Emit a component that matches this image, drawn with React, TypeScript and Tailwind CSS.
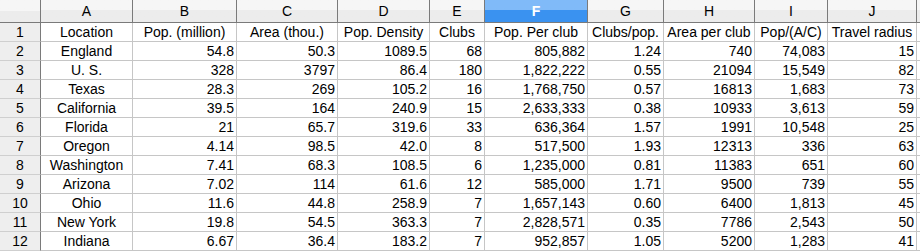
import React from 'react'

const cols = ['A', 'B', 'C', 'D', 'E', 'F', 'G', 'H', 'I', 'J']

const headers = ['Location', 'Pop. (million)', 'Area (thou.)', 'Pop. Density', 'Clubs', 'Pop. Per club', 'Clubs/pop.', 'Area per club', 'Pop/(A/C)', 'Travel radius']

const rows: string[][] = [
  ['England', '54.8', '50.3', '1089.5', '68', '805,882', '1.24', '740', '74,083', '15'],
  ['U. S.', '328', '3797', '86.4', '180', '1,822,222', '0.55', '21094', '15,549', '82'],
  ['Texas', '28.3', '269', '105.2', '16', '1,768,750', '0.57', '16813', '1,683', '73'],
  ['California', '39.5', '164', '240.9', '15', '2,633,333', '0.38', '10933', '3,613', '59'],
  ['Florida', '21', '65.7', '319.6', '33', '636,364', '1.57', '1991', '10,548', '25'],
  ['Oregon', '4.14', '98.5', '42.0', '8', '517,500', '1.93', '12313', '336', '63'],
  ['Washington', '7.41', '68.3', '108.5', '6', '1,235,000', '0.81', '11383', '651', '60'],
  ['Arizona', '7.02', '114', '61.6', '12', '585,000', '1.71', '9500', '739', '55'],
  ['Ohio', '11.6', '44.8', '258.9', '7', '1,657,143', '0.60', '6400', '1,813', '45'],
  ['New York', '19.8', '54.5', '363.3', '7', '2,828,571', '0.35', '7786', '2,543', '50'],
  ['Indiana', '6.67', '36.4', '183.2', '7', '952,857', '1.05', '5200', '1,283', '41'],
]

const gridCols = 'grid-cols-[41px_92px_104px_101px_92px_55px_103px_76px_91px_73px_89px_1fr]'

export default function App() {
  return (
    <div className="w-[920px] h-[252px] bg-white overflow-hidden text-[14px] text-black" style={{ fontFamily: '"Liberation Sans", Arial, sans-serif' }}>
      <div className={`grid ${gridCols}`}>
        {/* column headers */}
        <div className="h-[23px] border-r border-b border-[#7a7a7a] bg-linear-to-b from-[#f6f6f6] from-50% to-[#ececec] to-50%" />
        {cols.map(c => (
          <div
            key={c}
            className={
              c === 'F'
                ? 'h-[23px] flex items-center justify-center border-r border-b border-[#7a7a7a] bg-linear-to-b from-[#80baf8] from-45% to-[#3a92f0] to-45% text-white font-bold'
                : 'h-[23px] flex items-center justify-center border-r border-b border-[#7a7a7a] bg-linear-to-b from-[#f6f6f6] from-45% to-[#ececec] to-45%'
            }
          >
            {c}
          </div>
        ))}
        <div className="h-[23px] border-b border-[#7a7a7a] bg-linear-to-b from-[#f6f6f6] from-45% to-[#ececec] to-45%" />

        {/* row 1: labels */}
        <div className="h-[19px] flex items-center justify-center border-r border-r-[#7a7a7a] border-b border-b-[#cfcfcf] bg-[#eeeeee]">1</div>
        {headers.map(h => (
          <div key={h} className="h-[19px] flex items-center justify-center whitespace-nowrap overflow-hidden border-r border-b border-[#c6c6c6]">
            {h}
          </div>
        ))}
        <div className="h-[19px] border-b border-[#c6c6c6]" />

        {/* data rows */}
        {rows.map((r, i) => (
          <React.Fragment key={i}>
            <div className="h-[19px] flex items-center justify-center border-r border-r-[#7a7a7a] border-b border-b-[#cfcfcf] bg-[#eeeeee]">{i + 2}</div>
            {r.map((v, j) => (
              <div
                key={j}
                className={
                  j === 0
                    ? 'h-[19px] flex items-center justify-center whitespace-nowrap border-r border-b border-[#c6c6c6]'
                    : 'h-[19px] flex items-center justify-end pr-[2px] whitespace-nowrap border-r border-b border-[#c6c6c6]'
                }
              >
                {v}
              </div>
            ))}
            <div className="h-[19px] border-b border-[#c6c6c6]" />
          </React.Fragment>
        ))}
      </div>
    </div>
  )
}
